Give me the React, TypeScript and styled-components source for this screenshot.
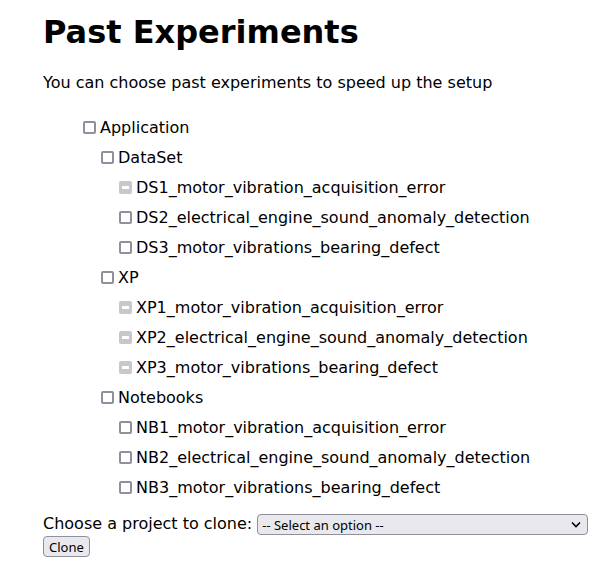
import React, { useEffect, useRef } from 'react';
import styled, { createGlobalStyle } from 'styled-components';

const GlobalStyle = createGlobalStyle`
    body {
        margin: 0;
        font-family: "DejaVu Sans", sans-serif;
        color: #000;
        background: #fff;
    }
`;

const Page = styled.div`
    padding: 0 43px;
`;

const Title = styled.h1`
    font-size: 32px;
    font-weight: bold;
    margin: 13px 0 22px 0;
`;

const Intro = styled.p`
    font-size: 16px;
    margin: 0 0 20px 0;
`;

const Tree = styled.ul`
    list-style: none;
    margin: 0;
    padding: 0 0 0 40px;
`;

const Branch = styled.ul`
    list-style: none;
    margin: 0;
    padding: 0 0 0 18px;
`;

const Row = styled.label`
    display: flex;
    align-items: center;
    height: 30px;
    font-size: 16px;
`;

const Box = styled.input`
    appearance: none;
    box-sizing: border-box;
    margin: 0 4px 0 0;
    width: 13px;
    height: 13px;
    border: 2px solid #8f8f9d;
    border-radius: 2px;
    background: #fff;
    position: relative;

    &:disabled {
        border-color: #c8c8cc;
        background: #c8c8cc;
    }

    &:indeterminate::after {
        content: "";
        position: absolute;
        left: 1px;
        right: 1px;
        top: 3px;
        height: 3px;
        background: #fff;
    }
`;

const CloneRow = styled.div`
    margin-top: 11px;
    font-size: 16px;
    line-height: 21px;
    white-space: nowrap;
`;

const SelectWrap = styled.span`
    position: relative;
    display: inline-block;
    vertical-align: middle;
    margin-left: 5px;
`;

const Select = styled.select`
    appearance: none;
    box-sizing: border-box;
    width: 331px;
    height: 21px;
    padding: 0 20px 0 4px;
    border: 1px solid #8f8f9d;
    border-radius: 4px;
    background: #e9e9ed;
    color: #000;
    font-family: "Noto Sans", sans-serif;
    font-size: 13px;
    display: block;
`;

const Chevron = styled.svg`
    position: absolute;
    right: 7px;
    top: 7px;
    width: 10px;
    height: 7px;
    pointer-events: none;
`;

const CloneButton = styled.button`
    display: block;
    box-sizing: border-box;
    height: 21px;
    margin-top: 1px;
    padding: 0 5px;
    border: 1px solid #8f8f9d;
    border-radius: 4px;
    background: #e9e9ed;
    color: #000;
    font-family: "Noto Sans", sans-serif;
    font-size: 13px;
`;

interface Node {
    name: string;
    disabled?: boolean;
    children?: Node[];
}

const tree: Node = {
    name: 'Application',
    children: [
        {
            name: 'DataSet',
            children: [
                { name: 'DS1_motor_vibration_acquisition_error', disabled: true },
                { name: 'DS2_electrical_engine_sound_anomaly_detection' },
                { name: 'DS3_motor_vibrations_bearing_defect' }
            ]
        },
        {
            name: 'XP',
            children: [
                { name: 'XP1_motor_vibration_acquisition_error', disabled: true },
                { name: 'XP2_electrical_engine_sound_anomaly_detection', disabled: true },
                { name: 'XP3_motor_vibrations_bearing_defect', disabled: true }
            ]
        },
        {
            name: 'Notebooks',
            children: [
                { name: 'NB1_motor_vibration_acquisition_error' },
                { name: 'NB2_electrical_engine_sound_anomaly_detection' },
                { name: 'NB3_motor_vibrations_bearing_defect' }
            ]
        }
    ]
};

const Check = ({ disabled }: { disabled?: boolean }) => {
    const ref = useRef<HTMLInputElement>(null);
    useEffect(() => {
        if (ref.current) {
            ref.current.indeterminate = !!disabled;
        }
    }, [disabled]);
    return <Box type="checkbox" ref={ref} disabled={disabled} />;
};

const TreeNode = ({ node }: { node: Node }) => {
    return (
        <li>
            <Row>
                <Check disabled={node.disabled} />
                {node.name}
            </Row>
            {node.children &&
                <Branch>
                    {node.children.map((child) => <TreeNode key={child.name} node={child} />)}
                </Branch>
            }
        </li>
    );
};

export default function App() {
    return (
        <Page>
            <GlobalStyle />
            <Title>Past Experiments</Title>
            <Intro>You can choose past experiments to speed up the setup</Intro>
            <Tree>
                <TreeNode node={tree} />
            </Tree>
            <CloneRow>
                Choose a project to clone:
                <SelectWrap>
                    <Select defaultValue="">
                        <option value="">-- Select an option --</option>
                    </Select>
                    <Chevron viewBox="0 0 10 7">
                        <path d="M1 1.5 L5 5.5 L9 1.5" fill="none" stroke="#000" strokeWidth="1.6" />
                    </Chevron>
                </SelectWrap>
            </CloneRow>
            <CloneButton>Clone</CloneButton>
        </Page>
    );
}
